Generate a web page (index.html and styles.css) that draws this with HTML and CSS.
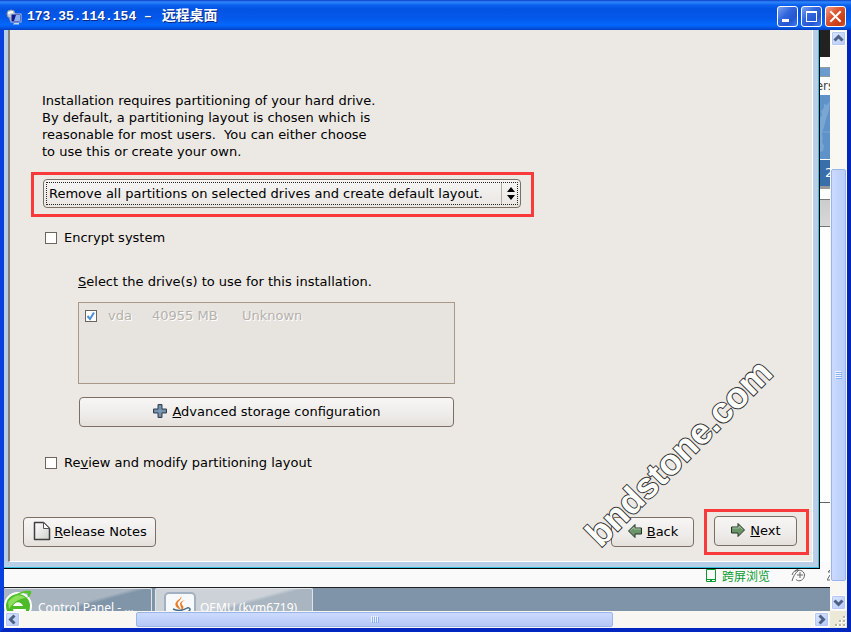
FILE: index.html
```html
<!DOCTYPE html>
<html lang="zh-CN">
<head>
	<meta charset="utf-8">
	<title>173.35.114.154 - 远程桌面</title>
	<link rel="stylesheet" href="styles.css">
</head>
<body>
	<div class="titlebar">
		<svg class="title-icon" width="16" height="16" viewBox="0 0 16 16">
			<circle cx="5" cy="5" r="4" fill="#c4ccd2" stroke="#8e9ca8"/>
			<path d="M2 4l5-1" stroke="#fff" stroke-width="2"/>
			<path d="M3 9h5v3H4z" fill="#9aa6b0"/>
			<rect x="5" y="5" width="10" height="8" fill="#101a90" stroke="#b8c4dc"/>
			<path d="M10 6h4v6H8z" fill="#8fb0ee"/>
			<path d="M8 14h5v1.500H7z" fill="#cfd4da"/>
		</svg>
		<h1 class="title-text">173.35.114.154 – <span class="title-cn">远程桌面</span></h1>
		<button class="win-btn" type="button" aria-label="最小化"><svg width="19" height="19"><path d="M4 12h7v3H4z" fill="#fff"/></svg></button>
		<button class="win-btn" type="button" aria-label="最大化"><svg width="19" height="19"><path d="M4 4h11v11H4z M5 6v8h9V6z" fill="#fff" fill-rule="evenodd"/></svg></button>
		<button class="win-btn close" type="button" aria-label="关闭"><svg width="19" height="19"><path d="M5 5l9 9M14 5l-9 9" stroke="#fff" stroke-width="2" stroke-linecap="square"/></svg></button>
	</div>

	<div class="frame">
		<div class="desktop">
			<div class="upper">
				<div class="dialog">
					<div class="panel">
						<form class="main">
							<p class="intro">Installation requires partitioning of your hard drive.<br>By default, a partitioning layout is chosen which is<br>reasonable for most users.&nbsp; You can either choose<br>to use this or create your own.</p>
							<div class="mark mark-select">
								<div class="combo">
									<select class="layout" aria-label="Partitioning layout">
										<option>Remove all partitions on selected drives and create default layout.</option>
									</select>
									<svg class="combo-arrow" width="20" height="21" viewBox="0 0 20 21">
										<path d="M1.500 0v21" stroke="#b5ada4"/>
										<path d="M7 9l4-5 4 5zM7 12l4 5 4-5z" fill="#000"/>
									</svg>
								</div>
							</div>
							<label class="check"><input type="checkbox"> Encrypt system</label>
							<div class="drives">
								<p class="drives-title"><u>S</u>elect the drive(s) to use for this installation.</p>
								<div class="list">
									<table>
										<tr>
											<td class="col-check"><input type="checkbox" id="vda" checked></td>
											<td class="col-name"><label for="vda">vda</label></td>
											<td class="col-size">40955 MB</td>
											<td>Unknown</td>
										</tr>
									</table>
								</div>
								<button class="btn advanced" type="button">
									<svg width="16" height="16" viewBox="0 0 16 16"><path d="M6 1.500h4V6h4.500v4H10v4.500H6V10H1.500V6H6z" fill="#6685a6" stroke="#38424d" stroke-linejoin="round"/><path d="M8 3v10M3 8h10" stroke="#86a2be"/></svg>
									<span><u>A</u>dvanced storage configuration</span>
								</button>
							</div>
							<label class="check"><input type="checkbox"> <span>Re<u>v</u>iew and modify partitioning layout</span></label>
						</form>
						<div class="footer">
							<button class="btn notes" type="button">
								<svg width="20" height="20" viewBox="0 0 20 20">
									<defs><linearGradient id="sheet" x2="1" y2="1"><stop stop-color="#fff"/><stop offset="1" stop-color="#cfcfcd"/></linearGradient></defs>
									<path d="M2.500 1.500h9l6 6v11h-15z" fill="url(#sheet)" stroke="#3f3f3f" stroke-width="1.500" stroke-linejoin="round"/>
									<path d="M11.500 1.500v6h6z" fill="#fff" stroke="#555" stroke-linejoin="round"/>
								</svg>
								<span><u>R</u>elease Notes</span>
							</button>
							<button class="btn nav" type="button">
								<svg width="16" height="16" viewBox="0 0 16 16"><path d="M1.500 8L8 1.500V5h6.500v6H8v3.500z" fill="#6b9468" stroke="#253325" stroke-linejoin="round"/><path d="M3.500 7.500L7 4v2h6.500" fill="none" stroke="#a3c1a0"/></svg>
								<span><u>B</u>ack</span>
							</button>
							<div class="mark mark-next">
								<button class="btn nav" type="button">
									<svg width="16" height="16" viewBox="0 0 16 16"><path d="M14.500 8L8 1.500V5H1.500v6H8v3.500z" fill="#6b9468" stroke="#253325" stroke-linejoin="round"/><path d="M2.500 6H9V4l3.500 3.500" fill="none" stroke="#a3c1a0"/></svg>
									<span><u>N</u>ext</span>
								</button>
							</div>
						</div>
					</div>
				</div>
				<div class="page-edge">
					<div class="edge-dark"></div>
					<div class="edge-blue"></div>
					<div class="edge-text">ers</div>
					<div class="edge-banner">
						<svg width="10" height="64" viewBox="0 0 10 64"><path d="M10 6L7 10l-3-1v4l-3 3 1 4-2 3v34l3-1 1-5-2-4 1-4-1-5 2-6 2-8 3-9z" fill="#7ba6d2"/><path d="M0 37h10" stroke="#7ba6d2"/></svg>
					</div>
					<div class="edge-num">2</div>
					<div class="edge-grey"></div>
					<div class="edge-rest"></div>
					<div class="edge-gap"></div>
				</div>
			</div>
			<div class="statusbar">
				<svg width="11" height="14" viewBox="0 0 11 14"><path d="M.5.500h9v12h-9zM.5 10.500h9M4 11.500h2" fill="none" stroke="#0a9a30"/></svg>
				<a class="screen-link" href="#">跨屏浏览</a>
				<svg class="speed" width="15" height="14" viewBox="0 0 15 14"><path d="M4 2.500C7 0 13 1 13.500 6C13.500 11 8 13.500 5 10.500M1 12C2 8 4 4 8 1M1 6C2 3 4 1 7 .5M6 6h6M9 3v6" fill="none" stroke="#666"/></svg>
				<svg class="cut" width="3" height="13" viewBox="0 0 3 13"><path d="M3 1L1 3h2M3 6L0 11h3" fill="none" stroke="#666"/></svg>
			</div>
			<div class="taskbar">
				<button class="task task-ie" type="button">
					<svg width="28" height="28" viewBox="0 0 28 28">
						<circle cx="14" cy="17" r="14" fill="#fff"/>
						<circle cx="14" cy="17" r="12" fill="#4dbb29"/>
						<path d="M4 13C8 6 16 4 22 9C15 9 9 14 5 20z" fill="#8cdf5b"/>
						<path d="M9 17C11 12 17 12 19 17zM9 20h13v4H10z" fill="#fff"/>
						<path d="M2 17C6 7 18 0 27 2C28 5 25 8 23 9C25 6 24 4 22 4C14 4 6 9 2 17z" fill="#52c52a"/>
					</svg>
					<span>Control Panel - ...</span>
				</button>
				<button class="task task-java" type="button">
					<svg width="32" height="32" viewBox="0 0 32 32">
						<rect x="1" y="1" width="30" height="30" rx="4" fill="#f8f9fa" stroke="#a2b1c2" stroke-width="2"/>
						<path d="M17 4C19 8 12 9 14 13L17 18C11 15 10 12 13 9C15 7 17 7 17 4zM21 8C17 10 17 12 19 14C20 16 19 18 17 19C19 15 14 13 17 10C18 9 20 8 21 8z" fill="#e87a24"/>
						<path d="M9 17c4 2 10 2 14-1M10 20c4 2 8 2 12 0M23 16c4-1 4 3 0 4" fill="none" stroke="#466b8c" stroke-width="1.500"/>
					</svg>
					<span>QEMU (kvm6719)</span>
				</button>
			</div>
			<div class="watermark">bndstone.com</div>
		</div>

		<div class="scroll scroll-v">
			<button class="arrow" type="button" aria-label="向上滚动"><svg width="13" height="13"><path d="M2.500 8.500l4-4 4 4" fill="none" stroke="#4d6185" stroke-width="3"/></svg></button>
			<div class="space v-before"></div>
			<div class="thumb v-thumb"><svg width="7" height="8"><path d="M0 .5h6M0 2.500h6M0 4.500h6M0 6.500h6" stroke="#eef4fe"/><path d="M1 1.500h6M1 3.500h6M1 5.500h6M1 7.500h6" stroke="#8cb0f8"/></svg></div>
			<div class="space v-after"></div>
			<button class="arrow" type="button" aria-label="向下滚动"><svg width="13" height="13"><path d="M2.500 4.500l4 4 4-4" fill="none" stroke="#4d6185" stroke-width="3"/></svg></button>
		</div>
		<div class="scroll scroll-h">
			<button class="arrow" type="button" aria-label="向左滚动"><svg width="13" height="13"><path d="M8.500 2.500l-4 4 4 4" fill="none" stroke="#4d6185" stroke-width="3"/></svg></button>
			<div class="space h-before"></div>
			<div class="thumb h-thumb"><svg width="8" height="7"><path d="M.5 0v6M2.500 0v6M4.500 0v6M6.500 0v6" stroke="#eef4fe"/><path d="M1.500 1v6M3.500 1v6M5.500 1v6M7.500 1v6" stroke="#8cb0f8"/></svg></div>
			<div class="space h-after"></div>
			<button class="arrow" type="button" aria-label="向右滚动"><svg width="13" height="13"><path d="M4.500 2.500l4 4-4 4" fill="none" stroke="#4d6185" stroke-width="3"/></svg></button>
		</div>
		<div class="corner">
			<svg width="13" height="13"><path d="M9 1h3v3H9zM5 5h3v3H5zM9 5h3v3H9zM1 9h3v3H1zM5 9h3v3H5zM9 9h3v3H9z" fill="#fff"/><path d="M9 1h2v2H9zM5 5h2v2H5zM9 5h2v2H9zM1 9h2v2H1zM5 9h2v2H5zM9 9h2v2H9z" fill="#b8b4a2"/></svg>
		</div>
	</div>
</body>
</html>
```
FILE: styles.css
```css
*{
	box-sizing:border-box;
}
body{
	margin:0;
	height:100vh;
	display:flex;
	flex-direction:column;
	overflow:hidden;
	background-color:#0831d9;
	font:13px/17px "DejaVu Sans",sans-serif;
	color:#000;
}
p,h1{
	margin:0;
}
svg{
	display:block;
	flex:none;
}
button{
	font:inherit;
	padding:0;
	cursor:pointer;
}

/* title bar */
.titlebar{
	height:30px;
	flex:none;
	display:flex;
	align-items:center;
	gap:3px;
	padding:3px 5px 0 6px;
	background:linear-gradient(#0a3fc8 0,#2f86fb 2px,#0b62ee 5px,#0353e2 9px,#0458ea 18px,#0468fe 25px,#0453e0 28px,#0340c0 30px);
}
.title-text{
	flex:1;
	padding-left:2px;
	font:bold 13px/18px "Liberation Mono","Noto Sans CJK SC",monospace;
	color:#fff;
	text-shadow:1px 1px 0 #0a2a86;
	white-space:pre;
}
.title-cn{
	padding-left:2px;
	font-size:14px;
}
.win-btn{
	width:21px;
	height:21px;
	border:1px solid #fff;
	border-radius:3px;
	background:linear-gradient(135deg,#7fa2f2,#3166dc 40%,#2455d2 70%,#3f7cf5);
}
.close{
	background:linear-gradient(135deg,#f0a08a,#dd5430 40%,#c83c14 80%,#d8603a);
}

.frame{
	flex:1;
	min-height:0;
	display:grid;
	grid-template-columns:minmax(0,1fr) 17px;
	grid-template-rows:minmax(0,1fr) 17px;
	border:4px solid #0a3fe0;
	border-top:0;
	border-right-color:#0226b8;
	border-bottom-color:#0226c0;
}
.desktop{
	position:relative;
	display:flex;
	flex-direction:column;
	overflow:hidden;
	background-color:#fafafa;
}
.upper{
	flex:1;
	min-height:0;
	display:flex;
}

/* installer window */
.dialog{
	flex:1;
	display:flex;
	padding:0 6px 6px 4px;
	background-color:#b9cfe7;
	border:solid #000;
	border-width:0 1px 1px 0;
	box-shadow:inset -1px -1px 0 #35c0e0;
}
.panel{
	flex:1;
	display:flex;
	flex-direction:column;
	justify-content:space-between;
	background-color:#ece9e4;
	border:solid #fff;
	border-width:0 1px 1px 2px;
	border-left-color:#858078;
}
.main{
	display:flex;
	flex-direction:column;
	align-items:flex-start;
	padding:62px 21px 0;
}
.intro{
	padding-left:11px;
}
.mark{
	border:3px solid #f93a3a;
}
.mark-select{
	margin-top:12px;
	padding:4px 10px 6px 9px;
}
.combo{
	position:relative;
}
.layout{
	display:block;
	width:478px;
	height:29px;
	padding:0 24px 0 5px;
	appearance:none;
	font:inherit;
	color:#000;
	border:1px solid #7b6f65;
	border-radius:4px;
	background:linear-gradient(#f6f5f4,#e9e6e2);
	outline:1px dotted #222;
	outline-offset:-4px;
}
.combo-arrow{
	position:absolute;
	right:1px;
	top:4px;
	pointer-events:none;
}
.check{
	display:flex;
	align-items:center;
	gap:7px;
	margin-top:12px;
	padding-left:14px;
}
input{
	display:block;
	appearance:none;
	flex:none;
	width:12px;
	height:12px;
	margin:0;
	border:1px solid #6d645c;
	background-color:#fff;
}
.drives{
	width:377px;
	margin:27px 0 15px 47px;
}
.list{
	height:82px;
	margin:12px 0 13px;
	padding:4px 6px;
	background-color:#e7e4df;
	border:1px solid #a8998a;
}
.list table{
	border-collapse:collapse;
	color:#b5b1ab;
	text-shadow:1px 1px 0 #fff;
}
.list td{
	padding:0;
}
.list input{
	background:#fff url("data:image/svg+xml,%3Csvg xmlns='http://www.w3.org/2000/svg' width='10' height='10'%3E%3Cpath d='M1.500 5l2.500 3 4-6.500' fill='none' stroke='%234a90d9' stroke-width='2'/%3E%3C/svg%3E");
}
.col-check{
	width:23px;
}
.col-name{
	width:44px;
}
.col-size{
	width:90px;
}
.btn{
	display:flex;
	align-items:center;
	justify-content:center;
	height:30px;
	gap:4px;
	padding-bottom:2px;
	color:#000;
	border:1px solid #7b6f65;
	border-radius:4px;
	background:linear-gradient(#f7f6f5,#eeecea 60%,#e4e0db);
}
.advanced{
	width:375px;
	margin:0 1px;
}
.footer{
	display:flex;
	align-items:center;
	padding:0 3px 6px 13px;
}
.notes{
	width:133px;
	margin-right:auto;
	gap:2px;
}
.nav{
	width:83px;
}
.mark-next{
	margin-left:10px;
	padding:4px 9px 6px 7px;
}

/* browser page showing behind the installer */
.page-edge{
	width:10px;
	flex:none;
	display:flex;
	flex-direction:column;
	overflow:hidden;
	background-color:#fff;
}
.edge-dark{
	height:27px;
	background-color:#222;
}
.edge-blue{
	height:10px;
	margin-top:10px;
	background-color:#6b9bcf;
	border:solid #999;
	border-width:1px 0;
}
.edge-text{
	height:18px;
	font-size:12px;
	line-height:18px;
	color:#444;
	display:flex;
	justify-content:center;
}
.edge-banner{
	height:64px;
	background-color:#5f92c8;
}
.edge-num{
	height:30px;
	padding-left:5px;
	line-height:26px;
	color:#fff;
	background-color:#3a6ea8;
	border-top:1px solid #fff;
	border-bottom:3px solid #999;
}
.edge-grey{
	height:28px;
	margin-top:10px;
	background:linear-gradient(#ccc,#d8d8d8);
	border:solid #777;
	border-width:1px 0;
}
.edge-rest{
	flex:1;
	border-bottom:1px solid #666;
}
.edge-gap{
	height:66px;
	border-bottom:7px solid #fafafa;
}

.statusbar{
	height:19px;
	flex:none;
	display:flex;
	align-items:flex-start;
	justify-content:flex-end;
	border-bottom:1px solid #222;
}
.screen-link{
	margin:0 21px 0 5px;
	font:12px/14px "Noto Sans CJK SC",sans-serif;
	color:#0a9a30;
	text-decoration:none;
}
.cut{
	margin-left:21px;
}
.taskbar{
	height:23px;
	flex:none;
	display:flex;
	gap:3px;
	overflow:hidden;
	background-color:#8094a9;
}
.task{
	display:flex;
	height:38px;
	color:#fff;
	font:12px/38px "Noto Sans",sans-serif;
	white-space:nowrap;
	border:1px solid #dfe4e9;
	border-bottom:0;
	border-radius:2px;
	text-align:left;
}
.task-ie{
	width:148px;
	gap:6px;
	border-left:0;
	background:linear-gradient(165deg,#a9b5c1 45%,#8195a9 50%);
}
.task-java{
	width:158px;
	gap:4px;
	padding:3px 0 0 8px;
	line-height:32px;
	background:linear-gradient(165deg,#ccd2d8 45%,#a9b5c0 50%);
}

/* scroll bars */
.scroll{
	display:flex;
	gap:1px;
	padding:1px;
	background-color:#f8f7f2;
}
.scroll-v{
	flex-direction:column;
}
.scroll-h{
	grid-row:2;
}
.arrow{
	flex:none;
	display:flex;
	align-items:center;
	justify-content:center;
	width:15px;
	height:15px;
	border:1px solid #fff;
	border-radius:2px;
	background:linear-gradient(135deg,#dce6fd,#b4c9f8);
	box-shadow:inset 0 0 0 1px #b5c8f3;
}
.thumb{
	display:flex;
	align-items:center;
	justify-content:center;
	border:1px solid #9ab4ec;
	border-radius:2px;
	background-color:#c4d4fb;
}
.v-thumb{
	background:linear-gradient(90deg,#cbdafe,#b9cdf8);
}
.h-thumb{
	background:linear-gradient(#cbdafe,#b5c9f7);
}
.v-before{
	flex:122;
}
.v-thumb{
	flex:413;
}
.v-after{
	flex:12;
}
.h-before{
	flex:115;
}
.h-thumb{
	flex:478;
}
.h-after{
	flex:200;
}
.corner{
	display:flex;
	align-items:flex-end;
	justify-content:flex-end;
	background-color:#ece9d8;
}

.watermark{
	position:absolute;
	right:21px;
	bottom:138px;
	width:260px;
	text-align:center;
	font:bold 36px/40px "Liberation Sans",sans-serif;
	color:#fff;
	-webkit-text-stroke:2px #333;
	paint-order:stroke fill;
	transform:rotate(-45deg);
	pointer-events:none;
}
```
